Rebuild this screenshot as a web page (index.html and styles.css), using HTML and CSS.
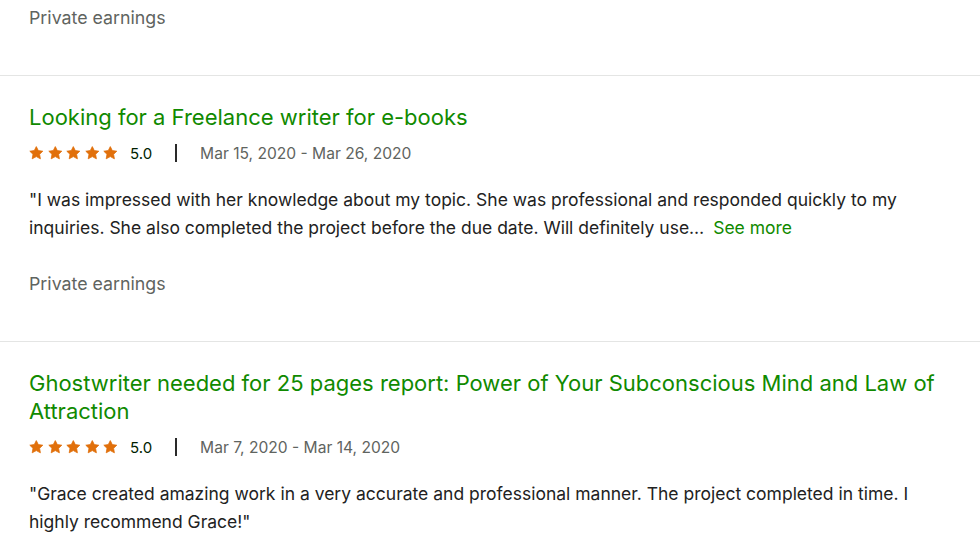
FILE: index.html
```html
<!DOCTYPE html>
<html lang="en">
<head>
    <meta charset="UTF-8">
    <meta name="viewport" content="width=device-width, initial-scale=1.0">
    <title>Work history</title>
    <link rel="stylesheet" href="styles.css">
</head>
<body>
    <svg width="0" height="0" class="defs">
        <symbol id="star" viewBox="0 0 14 14">
            <path d="M7 .6L9 4.6l4.5.6-3.2 3.1.8 4.5L7 10.6l-4.1 2.2.8-4.5L.5 5.2 5 4.6z"/>
        </symbol>
    </svg>

    <div class="history">
        <!-- tail of the previous job -->
        <section class="job job-tail">
            <p class="earnings">Private earnings</p>
        </section>

        <section class="job">
            <h2 class="job-title">Looking for a Freelance writer for e-books</h2>
            <div class="job-meta">
                <span class="stars">
                    <svg><use href="#star"/></svg><svg><use href="#star"/></svg><svg><use href="#star"/></svg><svg><use href="#star"/></svg><svg><use href="#star"/></svg>
                </span>
                <span class="score">5.0</span>
                <span class="sep"></span>
                <span class="dates">Mar 15, 2020 - Mar 26, 2020</span>
            </div>
            <p class="feedback">"I was impressed with her knowledge about my topic. She was professional and responded quickly to my inquiries. She also completed the project before the due date. Will definitely use… <a href="#" class="more">See more</a></p>
            <p class="earnings">Private earnings</p>
        </section>

        <section class="job">
            <h2 class="job-title">Ghostwriter needed for 25 pages report: Power of Your Subconscious Mind and Law of Attraction</h2>
            <div class="job-meta">
                <span class="stars">
                    <svg><use href="#star"/></svg><svg><use href="#star"/></svg><svg><use href="#star"/></svg><svg><use href="#star"/></svg><svg><use href="#star"/></svg>
                </span>
                <span class="score">5.0</span>
                <span class="sep"></span>
                <span class="dates">Mar 7, 2020 - Mar 14, 2020</span>
            </div>
            <p class="feedback">"Grace created amazing work in a very accurate and professional manner. The project completed in time. I highly recommend Grace!"</p>
        </section>
    </div>
</body>
</html>
```

FILE: styles.css
```css
* {
    box-sizing: border-box;
    margin: 0;
    padding: 0;
}

body {
    background: #fff;
    font-family: Inter, "Liberation Sans", Arial, sans-serif;
    color: #001e00;
}

.defs {
    position: absolute;
}

/* Job list */
.history {
    display: flex;
    flex-direction: column;
}

.job {
    padding: 27px 40px 43px 29px;
    border-bottom: 1px solid #e4e5e4;
}

.job-tail {
    padding-top: 4px;
}

.job-title {
    font-size: 22px;
    font-weight: normal;
    line-height: 28px;
    color: #108a00;
}

/* Rating + dates */
.job-meta {
    display: flex;
    align-items: center;
    height: 20px;
    margin-top: 12px;
}

.stars {
    display: flex;
    gap: 4px;
}

.stars svg {
    width: 14.6px;
    height: 14px;
    fill: #e1700b;
    stroke: #e1700b;
    stroke-width: 0.8;
    stroke-linejoin: round;
}

.score {
    margin-left: 12px;
    font-size: 15px;
    color: #001e00;
}

.sep {
    width: 2px;
    height: 18px;
    margin: 0 23px;
    background: #2a2a2a;
}

.dates {
    font-size: 15.6px;
    color: #5f6460;
}

.feedback {
    margin-top: 23px;
    font-size: 17.5px;
    line-height: 28px;
    color: #222;
}

.more {
    margin-left: 4px;
    color: #108a00;
    text-decoration: none;
}

.earnings {
    margin-top: 28px;
    font-size: 17.8px;
    line-height: 28px;
    color: #5f6460;
}

.job-tail .earnings {
    margin-top: 0;
}
```
